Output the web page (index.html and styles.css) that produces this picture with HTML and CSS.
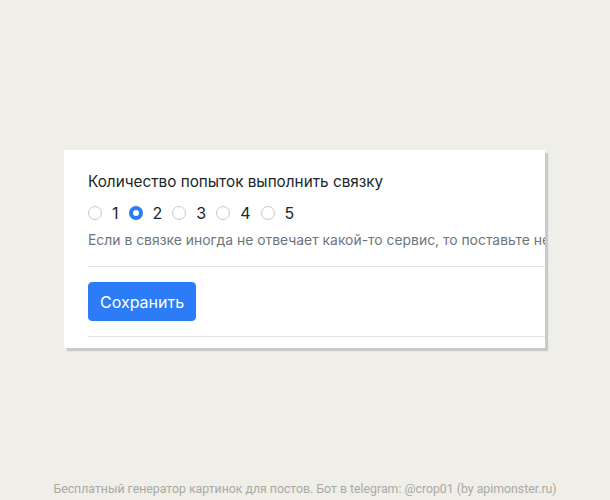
FILE: index.html
```html
<!DOCTYPE html>
<html lang="ru">
<head>
<meta charset="utf-8">
<link rel="stylesheet" href="styles.css">
</head>
<body>
<div class="page">
  <div class="card">
    <div class="inner">
      <div class="title">Количество попыток выполнить связку</div>
      <div class="radios">
        <label class="opt"><input type="radio" name="n"><span>1</span></label>
        <label class="opt"><input type="radio" name="n" checked><span>2</span></label>
        <label class="opt"><input type="radio" name="n"><span>3</span></label>
        <label class="opt"><input type="radio" name="n"><span>4</span></label>
        <label class="opt"><input type="radio" name="n"><span>5</span></label>
      </div>
      <div class="help">Если в связке иногда не отвечает какой-то сервис, то поставьте несколько попыток</div>
      <div class="rule"></div>
      <button class="btn">Сохранить</button>
      <div class="rule rule-bottom"></div>
    </div>
  </div>
  <div class="footer">Бесплатный генератор картинок для постов. Бот в telegram: @crop01 (by apimonster.ru)</div>
</div>
</body>
</html>
```
FILE: styles.css
```css
html, body {
  margin: 0;
  padding: 0;
}
body {
  background: #efeee8;
  font-family: Inter, "Liberation Sans", Arial, sans-serif;
  color: #212529;
}
.page {
  width: 610px;
  height: 500px;
  display: flex;
  flex-direction: column;
  box-sizing: border-box;
  padding-top: 150px;
}
.card {
  margin-left: 64px;
  width: 481px;
  height: 198px;
  background: #fff;
  overflow: hidden;
  box-shadow: 3px 3px 1px #c9c9c6;
  flex: none;
}
.inner {
  width: 700px;
  padding: 21px 0 0 24px;
}
.title {
  font-size: 15.3px;
  line-height: 22px;
  color: #212529;
}
.radios {
  display: flex;
  align-items: center;
  margin-top: 9px;
  height: 22px;
}
.opt {
  display: flex;
  align-items: center;
  margin-right: 10px;
  font-size: 16px;
  color: #212529;
}
.opt input {
  appearance: none;
  -webkit-appearance: none;
  width: 14px;
  height: 14px;
  margin: 0 10px 0 0;
  border: 1px solid #c8c8c8;
  border-radius: 50%;
  background: #fff;
  box-sizing: border-box;
}
.opt input:checked {
  border: 4px solid #2b7cf6;
  background: #fff;
}
.help {
  margin-top: 6px;
  font-size: 13.9px;
  line-height: 20px;
  color: #6c757d;
  white-space: nowrap;
}
.rule {
  height: 1px;
  background: #e3e3e3;
  margin-top: 16px;
}
.btn {
  display: block;
  margin-top: 15px;
  height: 39px;
  padding: 0 11px;
  font-family: Inter, "Liberation Sans", Arial, sans-serif;
  font-size: 16px;
  color: #fff;
  background: #2b7cf6;
  border: 1px solid #2b7cf6;
  border-radius: 4px;
}
.rule-bottom {
  margin-top: 15px;
}
.footer {
  margin-top: auto;
  margin-bottom: 3px;
  text-align: center;
  font-family: Roboto, "Liberation Sans", sans-serif;
  font-size: 12.3px;
  line-height: 16px;
  color: #a9a9a4;
}
```
